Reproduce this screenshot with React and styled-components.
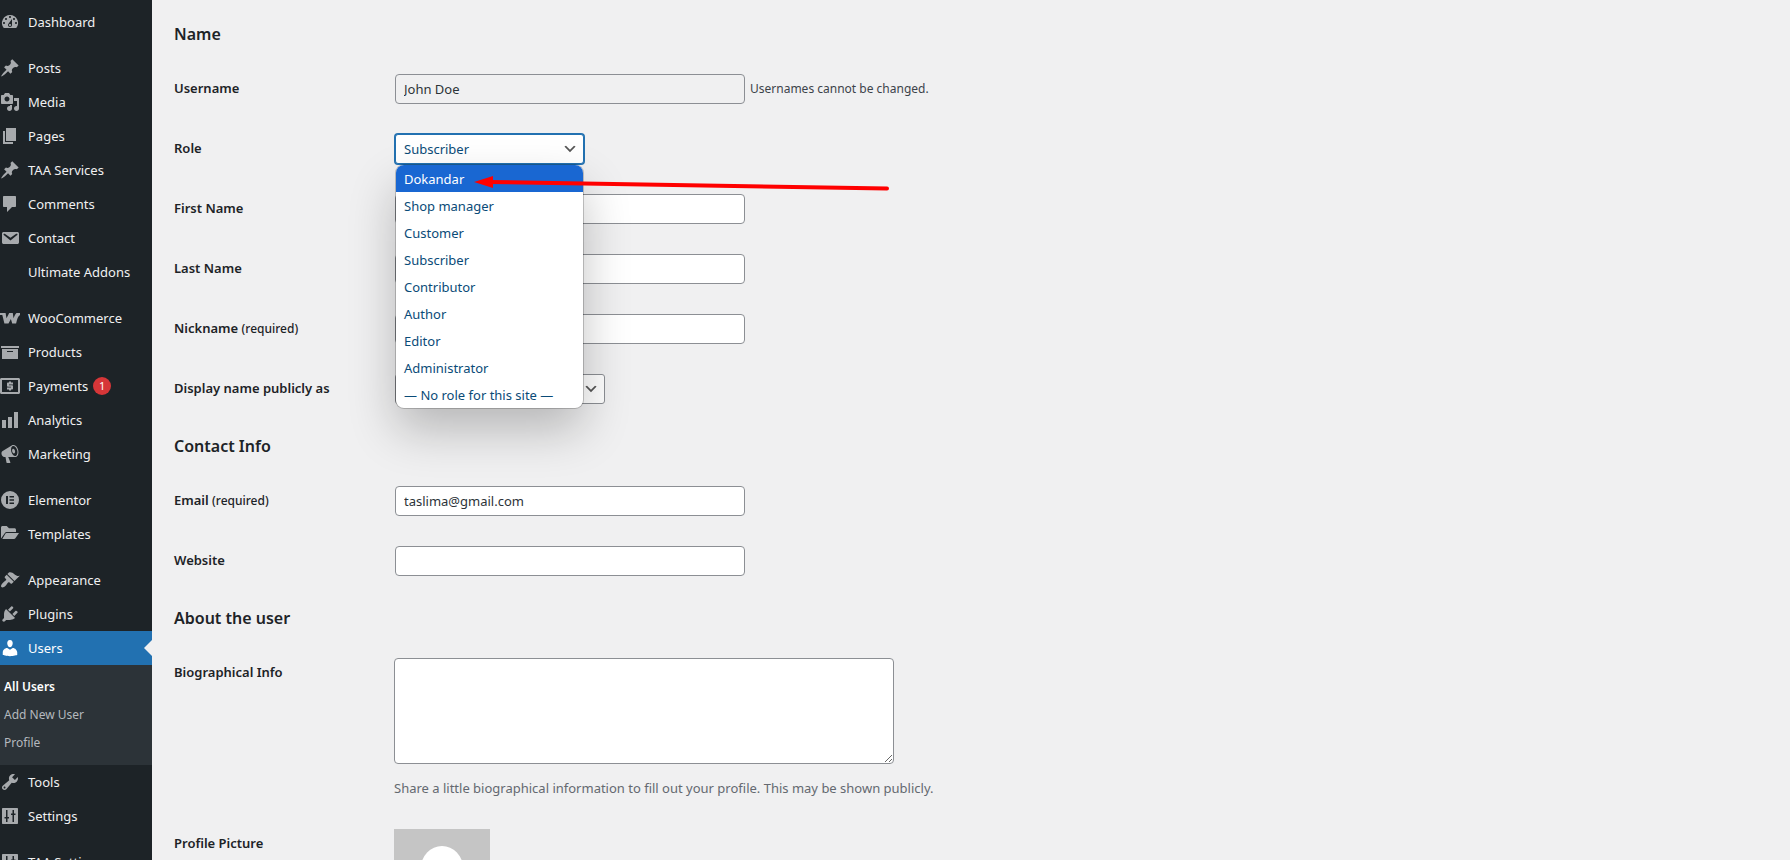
import React, { useState } from "react";
import styled, { createGlobalStyle, css } from "styled-components";

const GlobalStyle = createGlobalStyle`
  *, *::before, *::after {
    box-sizing: border-box;
  }
  body {
    margin: 0;
    background: #f0f0f1;
    color: #3c434a;
    font-family: "Segoe UI", "Noto Sans", "Open Sans", sans-serif;
    font-size: 13px;
    line-height: 20px;
  }
  ul {
    margin: 0;
    padding: 0;
    list-style: none;
  }
`;

const Page = styled.div`
  display: flex;
  height: 100vh;
  overflow: hidden;
`;

/* ---------- admin menu ---------- */
const Sidebar = styled.nav`
  flex: 0 0 152px;
  padding-top: 5px;
  background: #1d2327;
  overflow: hidden;
`;
const Separator = styled.li`
  height: 12px;
`;
const MenuLink = styled.a`
  position: relative;
  display: flex;
  align-items: center;
  height: 34px;
  color: #f0f0f1;
  text-decoration: none;
  white-space: nowrap;
  ${(props) =>
    props.$current &&
    css`
      background: #2271b1;
      color: #fff;
      &::after {
        content: "";
        position: absolute;
        right: 0;
        top: 9px;
        border: 8px solid transparent;
        border-left-width: 0;
        border-right-color: #f0f0f1;
      }
    `}
`;
const MenuIcon = styled.svg`
  flex: none;
  width: 20px;
  height: 20px;
  margin-right: 8px;
  fill: ${(props) => (props.$current ? "#fff" : "#a7aaad")};
`;
const Badge = styled.span`
  min-width: 18px;
  height: 18px;
  margin-left: 5px;
  border-radius: 9px;
  background: #d63638;
  color: #fff;
  font-size: 11px;
  line-height: 18px;
  text-align: center;
`;
const SubMenu = styled.ul`
  padding: 8px 0;
  background: #2c3338;
`;
const SubLink = styled.a`
  display: block;
  padding: 0 4px;
  font-size: 12px;
  line-height: 28px;
  text-decoration: none;
  color: ${(props) => (props.$current ? "#fff" : "#b4b9be")};
  font-weight: ${(props) => (props.$current ? 600 : 400)};
`;

/* ---------- profile form ---------- */
const Content = styled.main`
  flex: 1;
  min-width: 0;
  padding: 7px 22px 0;
`;
const SectionTitle = styled.h2`
  margin: 0;
  padding: 17px 0 15px;
  color: #1d2327;
  font-size: 16px;
  font-weight: 600;
  line-height: 20px;
`;
const Row = styled.div`
  display: grid;
  grid-template-columns: 220px 1fr;
  padding: 15px 0;
`;
const Label = styled.label`
  padding-top: 4px;
  color: #1d2327;
  font-weight: 600;
`;
const Required = styled.span`
  font-size: 12px;
  font-weight: 500;
`;
const Field = styled.div`
  position: relative;
  display: flex;
  align-items: center;
  gap: 5px;
  padding-left: 1px;
`;
const TextInput = styled.input`
  width: 350px;
  height: 30px;
  padding: 0 8px;
  border: 1px solid #8c8f94;
  border-radius: 4px;
  background: #fff;
  color: #2c3338;
  font: inherit;
  &:read-only {
    background: #f0f0f1;
  }
`;
const SelectBox = styled.span`
  position: relative;
  display: inline-flex;
  width: ${(props) => props.$width};
`;
const Select = styled.select`
  appearance: none;
  width: 100%;
  height: 30px;
  padding: 0 24px 0 8px;
  border: 1px solid ${(props) => (props.$open ? "#2271b1" : "#8c8f94")};
  border-radius: 3px;
  box-shadow: ${(props) => (props.$open ? "0 0 0 1px #2271b1" : "none")};
  background: #fff;
  color: ${(props) => (props.$open ? "#0a4b78" : "#2c3338")};
  font: inherit;
  outline: none;
`;
const Chevron = styled.svg`
  position: absolute;
  right: 6px;
  top: 7px;
  width: 16px;
  height: 16px;
  fill: #555;
  pointer-events: none;
`;
const Popup = styled.ul`
  position: absolute;
  z-index: 2;
  top: 31px;
  left: 1px;
  right: 1px;
  border-radius: 8px;
  overflow: hidden;
  background: #fff;
  color: #0a4b78;
  box-shadow: 0 0 0 1px rgba(0, 0, 0, 0.2), 0 22px 48px rgba(0, 0, 0, 0.24);
`;
const Option = styled.li`
  padding: 1px 8px 0;
  line-height: 26px;
  white-space: nowrap;
  cursor: default;
  ${(props) =>
    props.$active &&
    css`
      background: #1967d2;
      color: #fff;
    `}
`;
const Arrow = styled.svg`
  position: absolute;
  z-index: 3;
  left: 80px;
  top: 38px;
  width: 417px;
  height: 22px;
  pointer-events: none;
`;
const Hint = styled.span`
  font-size: 12px;
`;
const Stack = styled.div`
  display: flex;
  flex-direction: column;
  align-items: flex-start;
`;
const TextArea = styled.textarea`
  width: 500px;
  height: 106px;
  padding: 2px 6px;
  border: 1px solid #8c8f94;
  border-radius: 4px;
  background: #fff;
  font: inherit;
  resize: both;
`;
const Description = styled.p`
  margin: 14px 0 0;
  color: #646970;
  line-height: 21px;
`;
const Avatar = styled.svg`
  display: block;
  width: 96px;
  height: 96px;
`;

const icons = {
  dashboard:
    "M3.76 16h12.48A7.998 7.998 0 0 0 10 3a7.998 7.998 0 0 0-6.24 13zM10 4c.55 0 1 .45 1 1s-.45 1-1 1-1-.45-1-1 .45-1 1-1zM6 6c.55 0 1 .45 1 1s-.45 1-1 1-1-.45-1-1 .45-1 1-1zm8 0c.55 0 1 .45 1 1s-.45 1-1 1-1-.45-1-1 .45-1 1-1zm-5.37 5.55L12 7v6c0 1.1-.9 2-2 2s-2-.9-2-2c0-.57.24-1.08.63-1.45zM4 10c.55 0 1 .45 1 1s-.45 1-1 1-1-.45-1-1 .45-1 1-1zm12 0c.55 0 1 .45 1 1s-.45 1-1 1-1-.45-1-1 .45-1 1-1zm-5 3c0-.55-.45-1-1-1s-1 .45-1 1 .45 1 1 1 1-.45 1-1z",
  pin: "M10.44 3.02l1.82-1.82 6.36 6.35-1.83 1.82c-1.05-.68-2.48-.57-3.41.36l-.75.75c-.92.93-1.04 2.35-.35 3.41l-1.83 1.82-2.41-2.41-2.8 2.79c-.42.42-3.38 2.71-3.8 2.29s1.86-3.39 2.28-3.81l2.79-2.79L4.1 9.36l1.83-1.82c1.05.69 2.48.57 3.4-.36l.75-.75c.93-.92 1.05-2.35.36-3.41z",
  media:
    "M13 11V4c0-.55-.45-1-1-1h-1.67L9 1H5L3.67 3H2c-.55 0-1 .45-1 1v7c0 .55.45 1 1 1h10c.55 0 1-.45 1-1zM7 4.5c1.38 0 2.5 1.12 2.5 2.5S8.38 9.5 7 9.5 4.5 8.38 4.5 7 5.62 4.5 7 4.5zM14 6h5v10.5c0 1.38-1.12 2.5-2.5 2.5S14 17.88 14 16.5s1.12-2.5 2.5-2.5c.17 0 .34.02.5.05V9h-3V6zm-4 8.05V13h2v3.5c0 1.38-1.12 2.5-2.5 2.5S7 17.88 7 16.5 8.12 14 9.5 14c.17 0 .34.02.5.05z",
  page: "M6 15V2h10v13H6zm-1 1h8v2H3V5h2v11z",
  comment: "M4 2h11c.6 0 1 .4 1 1v9c0 .6-.4 1-1 1h-3l-5 5v-5H4c-.6 0-1-.4-1-1V3c0-.6.4-1 1-1z",
  mail: "M3.87 4h13.25C18.37 4 19 4.59 19 5.79v8.42c0 1.19-.63 1.79-1.88 1.79H3.87c-1.25 0-1.88-.6-1.88-1.79V5.79c0-1.2.63-1.79 1.88-1.79zm6.62 8.6l6.74-5.53c.24-.2.43-.66.13-1.07-.29-.41-.82-.42-1.17-.17l-5.7 3.86L4.8 5.83c-.35-.25-.88-.24-1.17.17-.3.41-.11.87.13 1.07z",
  woo: "M0 5h5.600L6.500 10.300 9.200 5h3.600l.7 5.200C14.400 8 15.200 6.200 16.500 5H20v2c-2 1-2.900 4.300-3.900 8.500h-3.900l-1.300-4.600-2.400 4.600H4.400L2.300 7H0z",
  archive: "M19 4v2H1V4h18zM2 7h16v10H2V7zm11 3V9H7v1h6z",
  money:
    "M1.500 2h17c.8 0 1.500.7 1.500 1.500v13c0 .8-.7 1.500-1.500 1.500h-17C.7 18 0 17.300 0 16.500v-13C0 2.700.7 2 1.500 2zM2 4v12h16V4zM9 5.500h2v1h2v2H9v.8h3.200c.5 0 .8.3.8.8v2.600c0 .5-.3.8-.8.8H11v1H9v-1H7v-2h4v-.700H7.800c-.5 0-.8-.3-.8-.8V7.300c0-.5.3-.8.8-.8H9z",
  chart: "M18 18V2h-4v16h4zm-6 0V7H8v11h4zm-6 0v-8H2v8h4z",
  megaphone:
    "M18.15 5.94c.46 1.62.38 3.22-.02 4.48-.42 1.28-1.26 2.18-2.3 2.48-.16.06-.26.06-.4.06-.06.02-.12.02-.18.02-.06.02-.14.02-.22.02h-6.8l2.22 5.5c.02.14-.06.26-.14.34-.08.1-.24.16-.34.16H6.95c-.1 0-.26-.06-.34-.16-.08-.08-.16-.2-.14-.34l-1-5.5H4.25l-.02-.02c-.5.06-1.08-.18-1.54-.62s-.88-1.08-1.06-1.88c-.24-.8-.2-1.56-.02-2.2.18-.62.58-1.08 1.06-1.3l.02-.02 9-5.4c.1-.06.18-.1.24-.16.06-.04.14-.08.24-.12.16-.08.28-.12.5-.18 1.04-.3 2.24.1 3.22.98s1.84 2.24 2.26 3.86zm-2.58 5.98h-.02c.4-.1.74-.34 1.04-.7.58-.7.86-1.76.86-3.04 0-.64-.1-1.3-.28-1.98-.34-1.36-1.02-2.5-1.78-3.24s-1.68-1.1-2.46-.88c-.82.22-1.4.96-1.7 2-.32 1.04-.28 2.36.06 3.72.38 1.36 1 2.5 1.8 3.24.78.74 1.62 1.1 2.48.88zm-2.54-7.08c.22-.04.42-.02.62.04.38.16.76.48 1.02 1s.42 1.2.42 1.78c0 .3-.04.56-.12.8-.18.48-.44.84-.86.94-.34.1-.8-.06-1.14-.4s-.64-.86-.78-1.5c-.18-.62-.12-1.24.02-1.72s.48-.84.82-.94z",
  elementor:
    "M10 1a9 9 0 1 0 0 18 9 9 0 0 0 0-18zM6 6h2v8H6zM9.5 6H14v1.5H9.5zM9.5 9.25H14v1.5H9.5zM9.5 12.5H14V14H9.5z",
  folder:
    "M1 3.500C1 2.700 1.700 2 2.500 2h4.200L9 4.300h5.500c.8 0 1.500.7 1.500 1.500V8H6.500c-.6 0-1.100.3-1.400.8L1 14.500zM6.500 9H19l-3.600 5.300c-.3.500-.8.700-1.400.700H2.300l3.200-5.400c.2-.4.5-.6 1-.6z",
  brush:
    "M14.48 11.06L7.41 3.99l1.5-1.5c.5-.56 2.3-.47 3.51.32 1.21.8 1.43 1.28 2.91 2.1 1.18.64 2.45 1.26 4.45.85zm-.71.71L6.7 4.7 4.93 6.47c-.39.39-.39 1.02 0 1.41l1.06 1.06c.39.39.39 1.03 0 1.42-.6.6-1.43 1.11-2.21 1.69-.35.26-.7.53-1.01.84C1.43 14.23.4 16.08 1.4 17.07c.99 1 2.84-.03 4.18-1.36.31-.31.58-.66.85-1.02.57-.78 1.08-1.61 1.69-2.21.39-.39 1.02-.39 1.41 0l1.06 1.06c.39.39 1.02.39 1.41 0z",
  plug: "M13.11 4.36L9.87 7.6 8 5.73l3.24-3.24c.35-.34 1.05-.2 1.56.32.52.51.66 1.21.31 1.55zm-8 1.77l.91-1.12 9.01 9.01-1.19.84c-.71.71-2.63 1.16-3.82 1.16H6.14L4.9 17.26c-.59.59-1.54.59-2.12 0-.59-.58-.59-1.53 0-2.12l1.24-1.24v-3.88c0-1.13.4-3.19 1.09-3.89zm7.26 3.97l3.24-3.24c.34-.35 1.04-.21 1.55.31.52.51.66 1.21.31 1.55l-3.24 3.25z",
  user: "M10 9.25c-2.27 0-2.73-3.44-2.73-3.44C7 4.02 7.82 2 9.97 2c2.16 0 2.98 2.02 2.71 3.81 0 0-.41 3.44-2.68 3.44zm0 2.57L12.72 10c2.39 0 4.52 2.33 4.52 4.53v2.49s-3.65 1.13-7.24 1.13c-3.65 0-7.24-1.13-7.24-1.13v-2.49c0-2.25 1.94-4.48 4.47-4.48z",
  wrench:
    "M16.68 9.77c-1.34 1.34-3.3 1.67-4.95.99l-5.41 6.52c-.99.99-2.59.99-3.58 0s-.99-2.59 0-3.57l6.52-5.42c-.68-1.65-.35-3.61.99-4.95 1.28-1.28 3.12-1.62 4.72-1.06l-2.89 2.89 2.82 2.82 2.86-2.87c.53 1.58.18 3.39-1.08 4.65zM3.81 16.21c.4.39 1.04.39 1.43 0 .4-.4.4-1.04 0-1.43-.39-.4-1.03-.4-1.43 0-.39.39-.39 1.03 0 1.43z",
  sliders:
    "M3 2h14c.6 0 1 .4 1 1v14c0 .6-.4 1-1 1H3c-.6 0-1-.4-1-1V3c0-.6.4-1 1-1zM6 4v7H4.500v1.500H6V16h1.500v-3.500H9V11H7.500V4zM12.500 4v3.500H11V9h1.500v7H14V9h1.500V7.500H14V4z",
};

// null marks a gap between groups
const menu = [
  { label: "Dashboard", icon: "dashboard" },
  null,
  { label: "Posts", icon: "pin" },
  { label: "Media", icon: "media" },
  { label: "Pages", icon: "page" },
  { label: "TAA Services", icon: "pin" },
  { label: "Comments", icon: "comment" },
  { label: "Contact", icon: "mail" },
  { label: "Ultimate Addons" },
  null,
  { label: "WooCommerce", icon: "woo" },
  { label: "Products", icon: "archive" },
  { label: "Payments", icon: "money", badge: 1 },
  { label: "Analytics", icon: "chart" },
  { label: "Marketing", icon: "megaphone" },
  null,
  { label: "Elementor", icon: "elementor" },
  { label: "Templates", icon: "folder" },
  null,
  { label: "Appearance", icon: "brush" },
  { label: "Plugins", icon: "plug" },
  {
    label: "Users",
    icon: "user",
    current: true,
    children: ["All Users", "Add New User", "Profile"],
  },
  { label: "Tools", icon: "wrench" },
  { label: "Settings", icon: "sliders" },
  null,
  { label: "TAA Settings", icon: "sliders" },
];

const roles = [
  "Dokandar",
  "Shop manager",
  "Customer",
  "Subscriber",
  "Contributor",
  "Author",
  "Editor",
  "Administrator",
  "— No role for this site —",
];

const AdminMenu = () => (
  <Sidebar aria-label="Main menu">
    <ul>
      {menu.map((item, i) =>
        item ? (
          <li key={item.label}>
            <MenuLink href="#" $current={item.current}>
              <MenuIcon viewBox="0 0 20 20" $current={item.current} aria-hidden="true">
                {item.icon && <path fillRule="evenodd" d={icons[item.icon]} />}
              </MenuIcon>
              {item.label}
              {item.badge && <Badge>{item.badge}</Badge>}
            </MenuLink>
            {item.children && (
              <SubMenu>
                {item.children.map((child, n) => (
                  <li key={child}>
                    <SubLink href="#" $current={n === 0}>
                      {child}
                    </SubLink>
                  </li>
                ))}
              </SubMenu>
            )}
          </li>
        ) : (
          <Separator key={i} />
        )
      )}
    </ul>
  </Sidebar>
);

const SelectChevron = () => (
  <Chevron viewBox="0 0 20 20" aria-hidden="true">
    <path d="M5 6l5 5 5-5 2 1-7 7-7-7 2-1z" />
  </Chevron>
);

const TextRow = ({ id, label, required, ...input }) => (
  <Row>
    <Label htmlFor={id}>
      {label} {required && <Required>(required)</Required>}
    </Label>
    <Field>
      <TextInput id={id} type="text" {...input} />
    </Field>
  </Row>
);

const RoleRow = () => {
  const [role, setRole] = useState("Subscriber");
  const [hovered, setHovered] = useState("Dokandar");
  return (
    <Row>
      <Label htmlFor="role">Role</Label>
      <Field>
        <SelectBox $width="189px">
          <Select id="role" $open value={role} onChange={(e) => setRole(e.target.value)}>
            {roles.map((name) => (
              <option key={name}>{name}</option>
            ))}
          </Select>
          <SelectChevron />
          <Popup role="listbox" aria-label="Role">
            {roles.map((name) => (
              <Option
                key={name}
                role="option"
                aria-selected={name === role}
                $active={name === hovered}
                onMouseEnter={() => setHovered(name)}
                onClick={() => setRole(name)}
              >
                {name}
              </Option>
            ))}
          </Popup>
        </SelectBox>
        <Arrow viewBox="0 0 417 22" aria-hidden="true">
          <path d="M14 10L413 16.5" stroke="#f00" strokeWidth="4" strokeLinecap="round" />
          <path d="M0 10L19 4v12z" fill="#f00" />
        </Arrow>
      </Field>
    </Row>
  );
};

const App = () => (
  <>
    <GlobalStyle />
    <Page>
      <AdminMenu />
      <Content>
        <SectionTitle>Name</SectionTitle>
        <Row>
          <Label htmlFor="username">Username</Label>
          <Field>
            <TextInput id="username" type="text" value="John Doe" readOnly />
            <Hint>Usernames cannot be changed.</Hint>
          </Field>
        </Row>
        <RoleRow />
        <TextRow id="first" label="First Name" />
        <TextRow id="last" label="Last Name" />
        <TextRow id="nickname" label="Nickname" required />
        <Row>
          <Label htmlFor="display">Display name publicly as</Label>
          <Field>
            <SelectBox $width="210px">
              <Select id="display" />
              <SelectChevron />
            </SelectBox>
          </Field>
        </Row>

        <SectionTitle>Contact Info</SectionTitle>
        <TextRow id="email" label="Email" required defaultValue="taslima@gmail.com" />
        <TextRow id="website" label="Website" />

        <SectionTitle>About the user</SectionTitle>
        <Row>
          <Label htmlFor="bio">Biographical Info</Label>
          <Stack>
            <TextArea id="bio" />
            <Description>
              Share a little biographical information to fill out your profile. This may be shown
              publicly.
            </Description>
          </Stack>
        </Row>
        <Row>
          <Label as="span">Profile Picture</Label>
          <Avatar viewBox="0 0 96 96" role="img" aria-label="Profile picture">
            <rect width="96" height="96" fill="#c5c5c5" />
            <ellipse cx="48" cy="39" rx="21" ry="22" fill="#fff" />
            <path d="M8 96c2-20 18-30 40-30s38 10 40 30z" fill="#fff" />
          </Avatar>
        </Row>
      </Content>
    </Page>
  </>
);

export default App;
